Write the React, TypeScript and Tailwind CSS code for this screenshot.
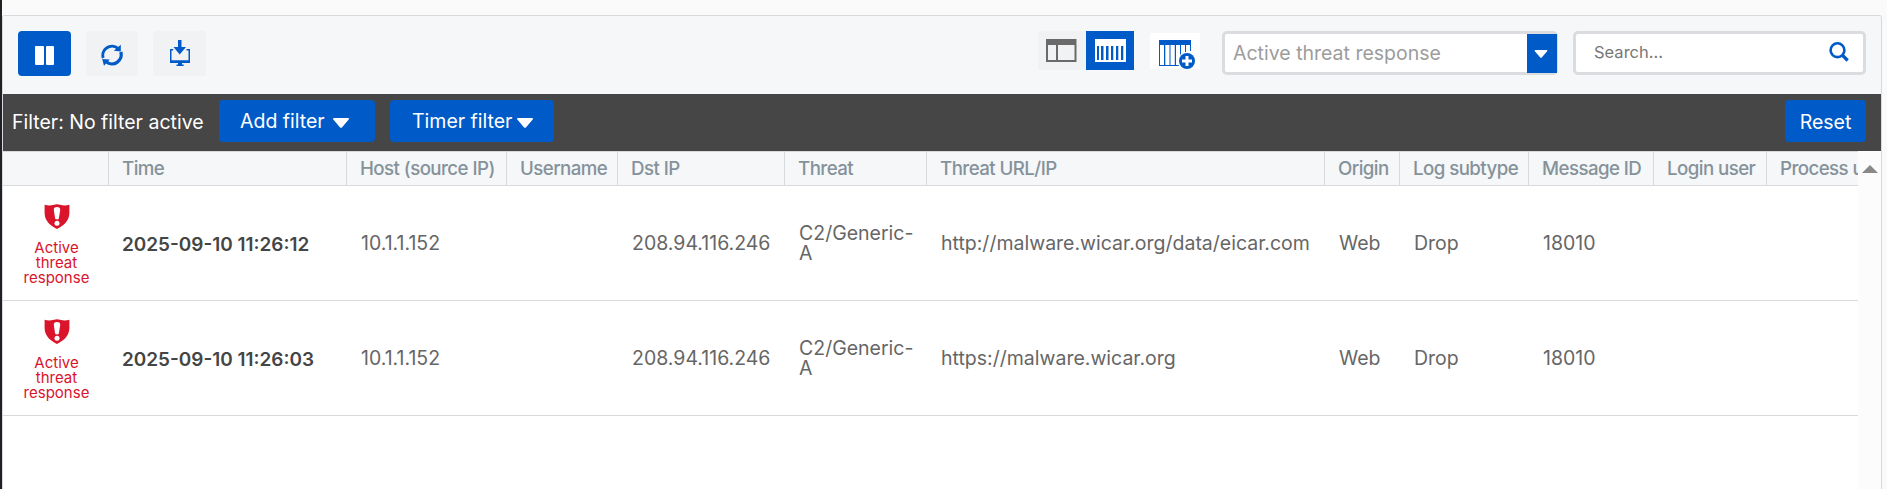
import React from "react";

const columns = [
  { label: "", width: "w-[106px]" },
  { label: "Time", width: "w-[238px]" },
  { label: "Host (source IP)", width: "w-[160px]" },
  { label: "Username", width: "w-[111px]" },
  { label: "Dst IP", width: "w-[167px]" },
  { label: "Threat", width: "w-[142px]" },
  { label: "Threat URL/IP", width: "w-[398px]" },
  { label: "Origin", width: "w-[75px]" },
  { label: "Log subtype", width: "w-[129px]" },
  { label: "Message ID", width: "w-[125px]" },
  { label: "Login user", width: "w-[113px]" },
  { label: "Process user", width: "w-[140px]" },
];

const rows = [
  ["2025-09-10 11:26:12", "10.1.1.152", "", "208.94.116.246", "C2/Generic-A", "http://malware.wicar.org/data/eicar.com", "Web", "Drop", "18010", "", ""],
  ["2025-09-10 11:26:03", "10.1.1.152", "", "208.94.116.246", "C2/Generic-A", "https://malware.wicar.org", "Web", "Drop", "18010", "", ""],
];

function cellClass(i: number) {
  if (i === 0) return "border-b border-[#d7d9dc] p-0 pl-[13px] pt-[3px] font-semibold text-[18.950px] text-[#454545]";
  if (i === 4) return "border-b border-[#d7d9dc] p-0 pl-[14px] pr-[12px]";
  return "whitespace-nowrap border-b border-[#d7d9dc] p-0 pl-[14px]";
}

function Caret({ className }: { className: string }) {
  return (
    <svg className={className} viewBox="0 0 16 10">
      <path d="M.9 0h14.2c.8 0 1.1.9.6 1.5L8.9 9.4c-.5.6-1.3.6-1.8 0L.3 1.5C-.2.9.1 0 .9 0z" fill="currentColor" />
    </svg>
  );
}

function Refresh() {
  return (
    <svg width="22" height="22" viewBox="0 0 22 22" fill="none">
      <path d="M2.200 14A9.200 9.200 0 0 1 16.800 4.200" stroke="#005bc8" strokeWidth="2.900" />
      <path d="M19.800 8A9.200 9.200 0 0 1 5.200 17.800" stroke="#005bc8" strokeWidth="3.300" />
      <path d="M19.800.8v6.800l-7-.8z" fill="#005bc8" />
      <path d="M1.200 15l7.500.6-5.700 6.200z" fill="#005bc8" />
    </svg>
  );
}

function Download() {
  return (
    <svg width="20" height="26" viewBox="0 0 20 26" fill="#005bc8">
      <path d="M8 0h3.500v7h4.500L9.700 14.500 3.500 7H8z" />
      <path d="M0 9h3.200v1.400H1.500v9.800h17v-9.800h-2V9H20v14H0z" />
      <path d="M8 23h4v1.600h1.700V26H6.500v-1.400H8z" />
    </svg>
  );
}

function Shield() {
  return (
    <svg width="26" height="25" viewBox="0 0 26 25">
      <path d="M.6.7Q5 2.2 10 .7q3-1 6 0 5 1.5 9.400 0V9c0 8-6.3 13-12.4 16C6.800 22 .6 17 .6 9z" fill="#d9142b" />
      <path d="M13 3c2.200 0 3.400 1 3.200 3l-1.300 8.200c-.3 1.600-3.500 1.600-3.800 0L9.800 6C9.600 4 10.800 3 13 3z" fill="#fff" />
      <circle cx="13" cy="19.300" r="2.500" fill="#fff" />
    </svg>
  );
}

function SplitView() {
  return (
    <svg width="31" height="23" viewBox="0 0 31 23">
      <path d="M0 0h30.500v23H0z" fill="#6a6a6a" />
      <path d="M2 6h8v15H2zM12 6h16.500v15H12z" fill="#f1f2f4" />
    </svg>
  );
}

function ColumnView() {
  return (
    <svg width="31" height="23" viewBox="0 0 31 23">
      <path d="M0 0h31v23H0z" fill="#fff" />
      <path d="M2 7h2v14H2zM6 7h2.500v14H6zM11 7h2.500v14H11zM16 7h2.300v14H16zM21 7h2.300v14H21zM26 7h2.300v14H26z" fill="#005bc8" />
    </svg>
  );
}

function AddColumn() {
  return (
    <svg width="37" height="30" viewBox="0 0 37 30">
      <path d="M0 1h32v26H0z" fill="#005bc8" />
      <path d="M1 6h4v20H1zM6.300 6h4.200v20H6.300zM11.500 6h4.300v20h-4.300zM17 6h4v20h-4zM22 6h4v20h-4zM27 6h4v20h-4z" fill="#fff" />
      <path d="M20.500 25h6v3h-6zM28 12h5v6h-5z" fill="#fff" />
      <circle cx="28" cy="22" r="9.300" fill="#fff" />
      <circle cx="28" cy="22" r="8" fill="#005bc8" />
      <path d="M26.500 17h3v3.500H33v3h-3.500V27h-3v-3.500H23v-3h3.500z" fill="#fff" />
    </svg>
  );
}

function Toolbar() {
  return (
    <div className="flex h-[78px] shrink-0 items-start bg-[#f5f7f9] pl-[15px] pr-[15px] pt-[15px]">
      <button className="flex h-[45px] w-[53px] items-center justify-center gap-[2px] rounded-[4px] bg-[#005bc8] pt-[4px]">
        <span className="h-[19px] w-[8.500px] rounded-[1px] bg-white" />
        <span className="h-[19px] w-[8.500px] rounded-[1px] bg-white" />
      </button>
      <button className="ml-[15px] flex h-[45px] w-[52px] items-center justify-center rounded-[4px] bg-[#f0f2f4] pt-[2px]"><Refresh /></button>
      <button className="ml-[15px] flex h-[45px] w-[53px] items-center justify-center rounded-[4px] bg-[#f0f2f4] pb-px"><Download /></button>
      <div className="ml-auto flex">
        <button className="flex h-[39px] w-[48px] items-center bg-[#f0f2f4] pl-[8px]"><SplitView /></button>
        <button className="flex h-[39px] w-[48px] items-center bg-[#005bc8] pl-[9px]"><ColumnView /></button>
      </div>
      <button className="ml-[16px] mt-[2px] flex h-[36px] w-[50px] items-end justify-end bg-white pr-[4px]"><AddColumn /></button>
      <div className="ml-[22px] flex h-[44px] w-[336px] rounded-[5px] border-[3px] border-r-[1px] border-[#dadce0] bg-white">
        <span className="flex-1 whitespace-nowrap pl-[8px] pt-[6px] text-[19.500px] leading-[26px] text-[#9c9c9c]">Active threat response</span>
        <span className="flex h-[39px] w-[30px] items-center justify-center bg-[#005bc8] pr-[2px] text-white"><Caret className="mt-[1px] h-[8px] w-[14px]" /></span>
      </div>
      <div className="ml-[15px] flex h-[44px] w-[293px] rounded-[5px] border-[3px] border-[#dadce0] bg-white pl-[18px] pr-[14px]">
        <span className="flex-1 pt-[6px] text-[16.500px] leading-[25px] text-[#777]">Search...</span>
        <svg className="mt-[8px]" width="20" height="20" viewBox="0 0 20 20" fill="none" stroke="#005bc8">
          <circle cx="8.500" cy="8.200" r="6.900" strokeWidth="2.600" />
          <path d="M13.200 13l5.500 5.500" strokeWidth="3.200" />
        </svg>
      </div>
    </div>
  );
}

function FilterBar() {
  return (
    <div className="flex h-[57px] shrink-0 items-start bg-[#464646] pl-[9px] pr-[15px] pt-[6px] text-[19.500px] leading-[44px] text-white">
      <span className="w-[207px] whitespace-nowrap">Filter: No filter active</span>
      <button className="flex h-[42px] w-[156px] items-center whitespace-nowrap rounded-[4px] bg-[#005bc8] pl-[21px] pt-[2px] leading-none">
        Add filter<Caret className="ml-[8px] mt-[1px] h-[10px] w-[16px]" />
      </button>
      <button className="ml-[15px] flex h-[42px] w-[164px] items-center whitespace-nowrap rounded-[4px] bg-[#005bc8] pl-[22px] pt-[2px] leading-none">
        Timer filter<Caret className="ml-[5px] mt-[1px] h-[10px] w-[16px]" />
      </button>
      <button className="ml-auto h-[42px] w-[81px] rounded-[4px] bg-[#005bc8]">Reset</button>
    </div>
  );
}

function LogTable() {
  return (
    <div className="w-[1855px] shrink-0 overflow-hidden">
      <table className="w-[1904px] table-fixed border-separate border-spacing-0 text-left">
        <colgroup>{columns.map((c, i) => <col key={i} className={c.width} />)}</colgroup>
        <thead>
          <tr className="h-[35px] bg-[#f5f7f9] text-[18.700px] text-[#85929a]">
            {columns.map((c, i) => (
              <th key={i} className="whitespace-nowrap border-y border-r border-[#d7d9dc] p-0 pl-[13px] font-medium leading-[33px] tracking-[-0.560px]">{c.label}</th>
            ))}
          </tr>
        </thead>
        <tbody>
          {rows.map((r, n) => (
            <tr key={n} className="h-[115px] text-[19.500px] leading-[20px] text-[#666]">
              <td className="border-b border-[#d7d9dc] p-0">
                <div className="flex flex-col items-center pl-px pt-[2px] text-center text-[15px] leading-[15px] text-[#d9142b]">
                  <Shield />
                  <span className="mt-[11px] w-[70px]">Active threat response</span>
                </div>
              </td>
              {r.map((v, i) => <td key={i} className={cellClass(i)}>{v}</td>)}
            </tr>
          ))}
        </tbody>
      </table>
    </div>
  );
}

export default function App() {
  return (
    <div className="flex h-[489px] w-[1887px] overflow-hidden border-l-2 border-[#202124] bg-[#fafafa] pt-[15px] font-['Inter',sans-serif]">
      <main className="flex w-[1880px] flex-col overflow-hidden rounded-t-[3px] border-x border-t border-[#d7d9dc] bg-white">
        <Toolbar />
        <FilterBar />
        <div className="flex min-h-0 flex-1">
          <LogTable />
          <div className="flex flex-1 justify-center bg-[#fcfcfc] pt-[14px]">
            <svg width="16" height="8" viewBox="0 0 16 8"><path d="M8 0l8 8H0z" fill="#898989" /></svg>
          </div>
        </div>
      </main>
    </div>
  );
}
